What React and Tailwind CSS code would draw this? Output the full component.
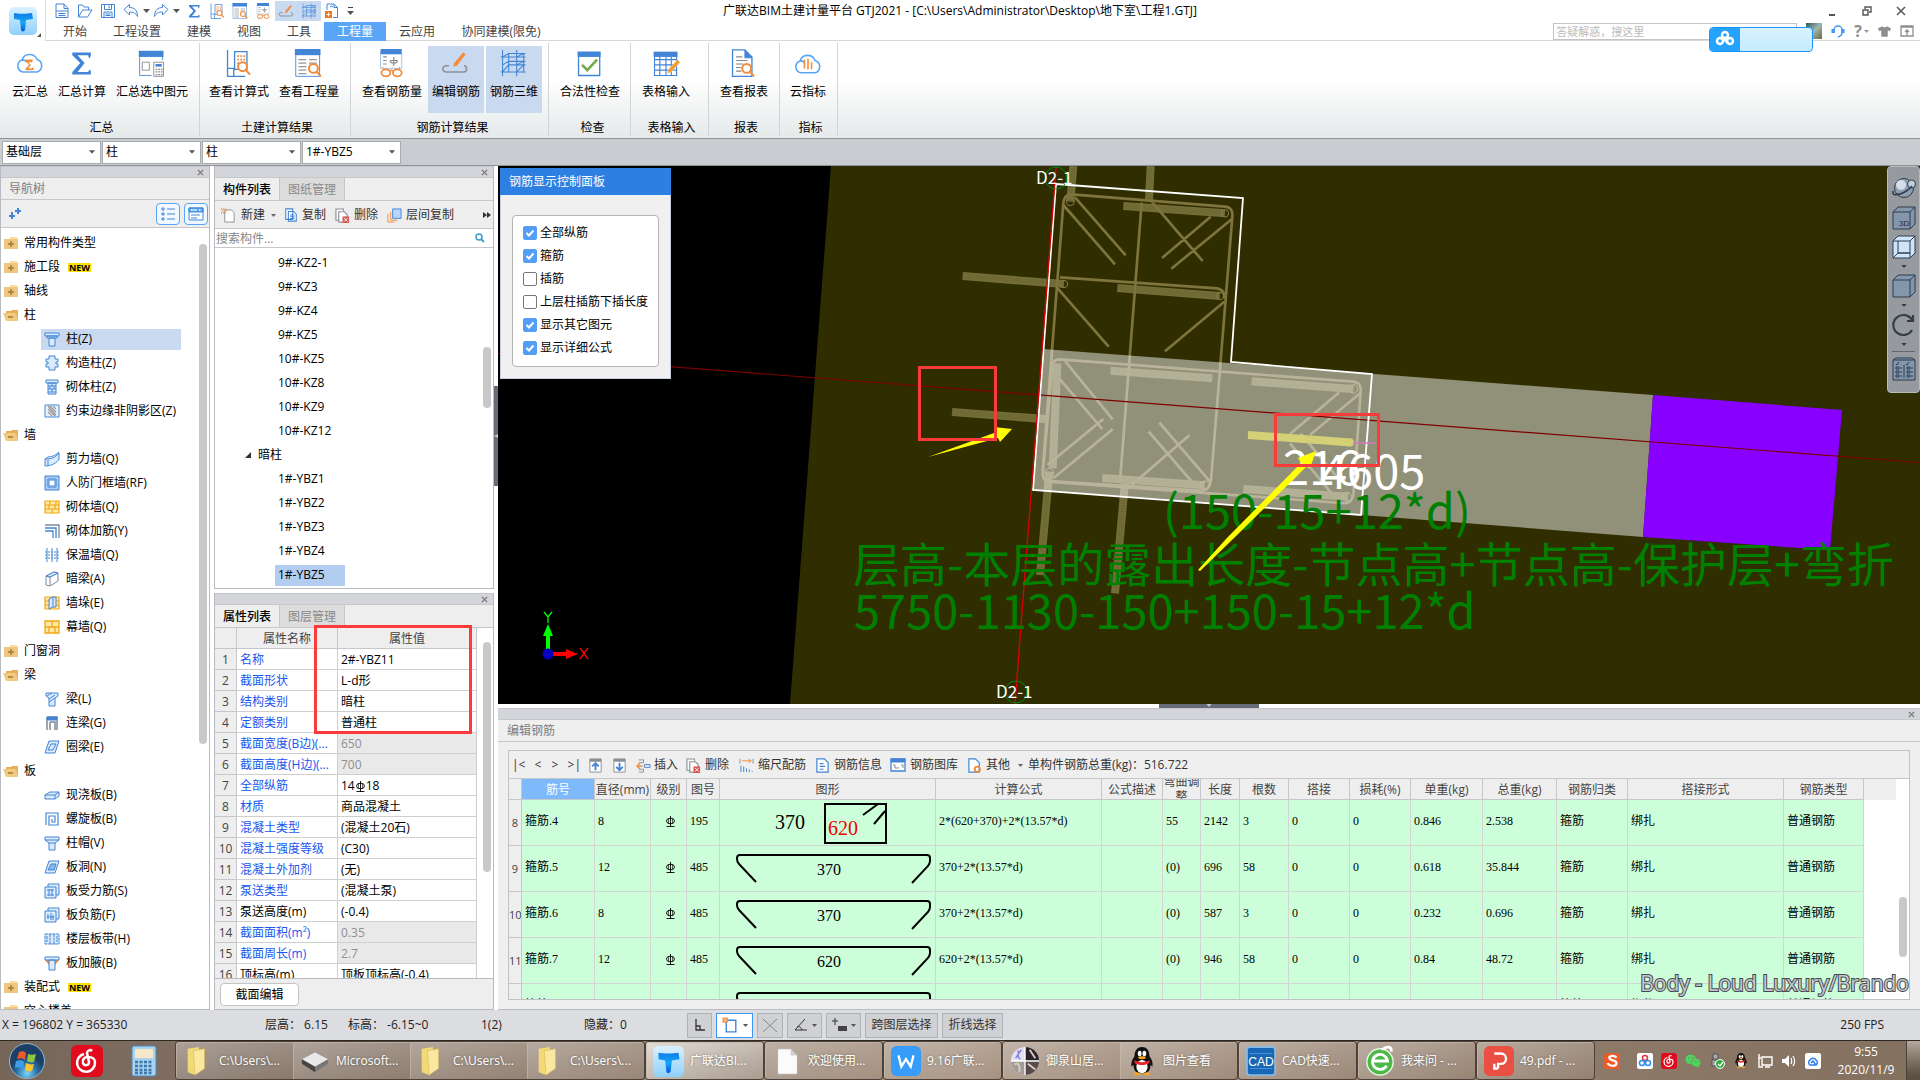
import { useState } from "react";
import { FaTshirt, FaWeixin } from "react-icons/fa";

const BLUE = "#4285d6";
const ORANGE = "#f08c3c";

function Svg({ size = 16, box = 16, className = "", children }) {
    return (
        <svg width={size} height={size} viewBox={`0 0 ${box} ${box}`} fill="none" stroke={BLUE} strokeWidth="1" className={`shrink-0 ${className}`} aria-hidden="true">
            {children}
        </svg>
    );
}

function Caret({ className = "text-[#555]" }) {
    return (
        <svg width="7" height="4" viewBox="0 0 7 4" className={`shrink-0 ${className}`} aria-hidden="true">
            <path d="M0 0h7L3.5 4z" fill="currentColor" />
        </svg>
    );
}

const Magnifier = ({ x, y, r = 3 }) => (
    <g stroke={ORANGE} strokeWidth={r / 2.2} fill="#fff">
        <circle cx={x} cy={y} r={r} />
        <path d={`M${x + r * 0.7} ${y + r * 0.7}l${r} ${r * 1.1}`} />
    </g>
);

const Sigma = ({ color = BLUE }) => <path d="M27 8V4H6v3l9 9-9 10v3h21v-5h-2l-1 2H12l8-10-8-9h12l1 4z" fill={color} stroke="none" />;

/* 32x32 drawings, shared by the quick access bar and the ribbon */
const bigIcons = {
    cloudSum: (
        <>
            <path d="M9 26a7 7 0 0 1-1-13.500A9 9 0 0 1 25 12a7.300 7.300 0 0 1 0 14zM8 13c2-1 4 0 5 2" stroke="#5aa5f5" strokeWidth="1.800" />
            <path d="M20 14v-2h-8v2l4 4-4 4v2h9v-3h-1l-1 1h-4l3-4-3-3h4z" fill={ORANGE} stroke="none" />
        </>
    ),
    sigma: <Sigma />,
    selected: (
        <>
            <path d="M3 3h26v27H3z" fill="#fff" />
            <path d="M2 2h28v7H2z" fill={BLUE} stroke="none" />
            <path d="M6 15h8v9H6z" stroke="#888" />
            <path d="M17 13h15v19H17z" fill="#fff" stroke="#fff" />
            <path d="M19 15h11v16H19z" stroke="#888" />
            <path d="M21 17h7v3h-7z" fill={BLUE} stroke="none" />
            <path d="M21 23h8M21 26h8M21 29h8" stroke="#888" strokeDasharray="2 1" strokeWidth="1.500" />
        </>
    ),
    formula: (
        <>
            <path d="M4 1v30h20M4 22h7v9M12 3h14v20H12z" fill="#fff" strokeWidth="1.500" />
            <path d="M15 8h9M15 12h9M15 16h6" stroke={ORANGE} strokeWidth="2" strokeDasharray="2 1.500" />
            <Magnifier x={21} y={20} r={5} />
        </>
    ),
    quantity: (
        <>
            <path d="M2 1h27v30H2z" fill="#fff" />
            <path d="M1 0h29v7H1z" fill={BLUE} stroke="none" />
            <path d="M5 12h9M17 12h9M5 16h9M17 16h9M5 20h9M5 24h9M5 28h9" stroke="#999" strokeWidth="1.500" />
            <Magnifier x={22} y={22} r={5} />
        </>
    ),
    rebarAmount: (
        <>
            <path d="M4 4h24v18H4z" stroke="#9bbde8" />
            <path d="M4 0h24v6H4z" fill={BLUE} stroke="none" />
            <path d="M7 9h4M7 13h4M7 17h4M19 9v10M15 13a4 3 0 0 0 8 0M15 13h8" stroke="#888" strokeWidth="1.300" />
            <path d="M6 22l1-2M26 22l-1-2" stroke={ORANGE} />
            <ellipse cx="10" cy="27" rx="5" ry="4" stroke={ORANGE} strokeWidth="2" fill="#fff" />
            <ellipse cx="23" cy="27" rx="5" ry="4" stroke={ORANGE} strokeWidth="2" fill="#fff" />
            <path d="M14 25c1-1 3-1 4 0" stroke={ORANGE} strokeWidth="2" />
        </>
    ),
    editRebar: (
        <>
            <path d="M9 19H6a4 3.500 0 0 0 0 7h20a3 3.500 0 0 0 0-7" stroke="#8a9099" strokeWidth="1.800" />
            <path d="M14 20l1-4L25 4l3 2-10 13z" fill={ORANGE} stroke="none" />
        </>
    ),
    rebar3d: <path d="M4 1v30M11 5v22M20 1v30M28 5v22M2 9h28M2 26h28M4 9l7-4h19M4 26l7-8h19M20 9l8-4M20 26l8-8M11 14h19M4 18l7-4M20 18l8-4" strokeWidth="1.200" />,
    check: (
        <>
            <path d="M4 4h24v26H4z" fill="#fff" strokeWidth="1.500" />
            <path d="M3 3h26v6H3z" fill={BLUE} stroke="none" />
            <path d="M8 18l6 6 11-12" stroke="#72ab4e" strokeWidth="3" />
        </>
    ),
    tableIn: (
        <>
            <path d="M4 5h25v25H4zM4 12h25M4 18h25M4 24h25M10 9v21M17 9v21M23 9v21" fill="#fff" strokeWidth="1.300" />
            <path d="M3 3h27v6H3z" fill={BLUE} stroke="none" />
            <path d="M18 28l2-5 10-11 3 3-10 11z" fill="#f39a20" stroke="#fff" strokeWidth=".5" />
        </>
    ),
    report: (
        <>
            <path d="M4 1h14l8 8v22H4z" fill="#fff" strokeWidth="1.500" />
            <path d="M18 1v9h8z" fill={BLUE} />
            <path d="M8 9h7M8 13h13M8 17h8M8 21h6M8 25h6" stroke="#888" strokeWidth="1.300" />
            <Magnifier x={20} y={22} r={5} />
        </>
    ),
    cloudIndex: (
        <>
            <path d="M9 27a7 7 0 0 1-1-13.500A9 9 0 0 1 25 13a7.300 7.300 0 0 1 0 14zM8 14c2-1 4 0 5 2" stroke="#5aa5f5" strokeWidth="1.800" />
            <path d="M13 12v10M17 11v12M21 15v8" stroke={ORANGE} strokeWidth="1.800" />
        </>
    ),
    file: <path d="M4 2h16l8 9v18H4zM20 2v9h8M4 16h24M9 21h14M9 25h14" strokeWidth="2" />,
    open: <path d="M3 28V4h8l3 4h9v6M3 28l8-14h19l-9 14z" strokeWidth="2" />,
    save: <path d="M3 3h26v26H3zM9 3v10h14V3M18 5v6M8 29V18h16v11M11 22h10M11 25h10" strokeWidth="2" />,
    undo: <path d="M2 13L13 3v6c9 0 16 5 16 18-4-7-8-9-16-9v6z" strokeWidth="2" />,
    redo: <path d="M30 13L19 3v6C10 9 3 14 3 27c4-7 8-9 16-9v6z" strokeWidth="2" />,
    addFile: (
        <>
            <path d="M6 14V2h14l7 7v20h-9M20 2v7h7M12 8a4 4 0 0 1 6 0" strokeWidth="2" />
            <path d="M2 16h14v14H2z" fill="#f07818" stroke="none" />
            <path d="M9 19v8M5 23h8" stroke="#fff" strokeWidth="2" />
        </>
    ),
};

const BigIcon = ({ name, size = 28 }) => <Svg size={size} box={34}>{bigIcons[name]}</Svg>;

const ribbon = [
    { label: "汇总", cls: "w-[200px] pl-1", items: [["云汇总", "cloudSum", "w-[52px]"], ["汇总计算", "sigma", "w-[52px]"], ["汇总选中图元", "selected", "w-[88px]"]] },
    { label: "土建计算结果", cls: "w-[151px] pl-1", items: [["查看计算式", "formula", "w-[70px]"], ["查看工程量", "quantity", "w-[70px]"]] },
    { label: "钢筋计算结果", cls: "w-[198px] pl-[6px]", items: [["查看钢筋量", "rebarAmount", "w-[70px]"], ["编辑钢筋", "editRebar", "w-14 ml-px", true], ["钢筋三维", "rebar3d", "w-14 ml-[2px]", true]] },
    { label: "检查", cls: "w-[82px] pl-[6px]", items: [["合法性检查", "check", "w-[70px]"]] },
    { label: "表格输入", cls: "w-[78px] pl-1", items: [["表格输入", "tableIn", "w-[62px]"]] },
    { label: "报表", cls: "w-[71px] pl-1", items: [["查看报表", "report", "w-[62px]"]] },
    { label: "指标", cls: "w-[58px] pl-1", items: [["云指标", "cloudIndex", "w-[48px]"]] },
];

const menuTabs = [
    ["开始", "w-[50px]"], ["工程设置", "w-[74px]"], ["建模", "w-[50px]"], ["视图", "w-[50px]"], ["工具", "w-[50px]"],
    ["工程量", "w-[62px]"], ["云应用", "w-[62px]"], ["协同建模(限免)", "w-[106px]"],
];

function QuickButton({ name, label, on }) {
    return (
        <button aria-label={label} className={`flex h-[20px] w-[23px] items-center justify-center ${on ? "bg-[#c9d9f0]" : ""}`}>
            <BigIcon name={name} size={17} />
        </button>
    );
}

function Logo({ size = 28 }) {
    return (
        <svg width={size} height={size} viewBox="0 0 28 28" className="shrink-0" aria-hidden="true">
            <defs>
                <linearGradient id="lg" x1="0" y1="0" x2="0" y2="1"><stop offset="0" stopColor="#d9f1ff" /><stop offset="1" stopColor="#8fd0fb" /></linearGradient>
                <linearGradient id="tg" x1="0" y1="0" x2="0" y2="1"><stop offset="0" stopColor="#0d7bea" /><stop offset=".5" stopColor="#15a8f4" /><stop offset="1" stopColor="#0759d4" /></linearGradient>
            </defs>
            <rect width="28" height="28" rx="5" fill="url(#lg)" />
            <path d="M5 6c3 1 14 1 18 0l1 6-7 1-1 10c-2 2-3 2-4 0l-1-10-6-1z" fill="url(#tg)" />
        </svg>
    );
}

function Header() {
    return (
        <header className="relative h-[41px] shrink-0 bg-white">
            <div className="absolute left-0 top-0 z-10 flex h-[41px] w-[46px] items-center justify-center border-r border-[#ddd] bg-white">
                <Logo />
                <span className="absolute bottom-1 right-1 h-0 w-0 border-b-4 border-l-4 border-b-[#555] border-l-transparent" />
            </div>
            <div className="grid h-[22px] grid-cols-[1fr_auto_1fr] items-center">
                <div className="flex items-center pl-[51px]">
                    <QuickButton name="file" label="新建" />
                    <QuickButton name="open" label="打开" />
                    <QuickButton name="save" label="保存" />
                    <QuickButton name="undo" label="撤销" />
                    <Caret />
                    <QuickButton name="redo" label="恢复" />
                    <Caret className="mr-[3px] text-[#555]" />
                    <QuickButton name="sigma" label="汇总计算" />
                    <QuickButton name="formula" label="查看计算式" />
                    <QuickButton name="quantity" label="查看工程量" />
                    <QuickButton name="rebarAmount" label="查看钢筋量" />
                    <QuickButton name="editRebar" label="编辑钢筋" on />
                    <QuickButton name="rebar3d" label="钢筋三维" on />
                    <QuickButton name="addFile" label="添加" />
                    <div className="ml-[3px] flex flex-col items-center gap-[3px]"><span className="h-px w-[5px] bg-[#444]" /><Caret /></div>
                </div>
                <h1 className="text-black">广联达BIM土建计量平台 GTJ2021 - [C:\Users\Administrator\Desktop\地下室\工程1.GTJ]</h1>
                <div className="flex items-center justify-end gap-[24px] pr-[14px] text-[#555]">
                    <button aria-label="最小化" className="flex h-4 w-[12px] items-end justify-center pb-[3px]"><span className="h-[2px] w-[6px] bg-[#555]" /></button>
                    <button aria-label="还原"><Svg size={10} box={10}><path d="M3 3V1h6v5H7M1 4h5v5H1z" stroke="#555" strokeWidth="1.400" /></Svg></button>
                    <button aria-label="关闭"><Svg size={10} box={10}><path d="M1 1l8 8M9 1L1 9" stroke="#555" strokeWidth="1.500" /></Svg></button>
                </div>
            </div>
            <div className="flex h-[19px] items-center justify-between border-b border-[#d8d8d8] pl-[50px]">
                <nav className="flex text-[#444]">
                    {menuTabs.map(([t, w]) => (
                        <button key={t} className={`h-[19px] pt-px text-center ${w} ${t === "工程量" ? "bg-[#5aa5f5] text-white" : ""}`}>{t}</button>
                    ))}
                </nav>
                <div className="relative flex items-center gap-[9px] pr-[6px]">
                    <input aria-label="搜索" placeholder="答疑解惑，搜这里" className="h-[17px] w-[244px] border border-[#c4c4c4] px-[2px] text-[11px] placeholder:text-[#bbb]" />
                    <span className="h-4 w-4 bg-linear-to-br from-[#2f5a5e] via-[#9fb8b0] to-[#6e6a3e]" />
                    <Svg size={14} box={14}><path d="M3 9V6a4 4 0 0 1 8 0v3c0 2-1 3-4 4" stroke="#3c96f5" strokeWidth="1.500" /><path d="M2 5v4M12 5v4" stroke="#3c96f5" strokeWidth="3" /></Svg>
                    <button aria-label="帮助" className="flex items-center gap-[2px] text-[16px] font-bold text-[#8e8e8e]">?<Caret className="h-[3px] w-[5px] text-[#999]" /></button>
                    <FaTshirt className="text-[13px] text-[#8e8e8e]" />
                    <Svg size={14} box={14}><path d="M1 2h12v10H1zM1 3h12M7 11V6M5 8l2-2 2 2" stroke="#8e8e8e" strokeWidth="1.300" /></Svg>
                    <div className="absolute right-[107px] top-1 flex h-[25px] w-[104px] overflow-hidden rounded border border-[#1b94fb] bg-linear-to-b from-[#d9f2fe] to-[#c4ecfe]">
                        <div className="flex w-[30px] items-center justify-center bg-[#25a2fb]">
                            <Svg size={20} box={20}><g stroke="#fff" strokeWidth="2.500"><circle cx="10" cy="6" r="3" /><circle cx="5" cy="12" r="3" /><circle cx="15" cy="12" r="3" /><path d="M8 9l5 5" /></g></Svg>
                        </div>
                    </div>
                </div>
            </div>
        </header>
    );
}

function Ribbon() {
    return (
        <div className="flex h-[97px] shrink-0 bg-linear-to-b from-white from-40% to-[#e5e9ea] text-black">
            {ribbon.map((g) => (
                <section key={g.label} className={`flex flex-col ${g.cls} my-[2px] border-r border-[#d2d4d6]`}>
                    <div className="mt-[3px] flex">
                        {g.items.map(([t, icon, w, on]) => (
                            <button key={t} className={`flex h-[67px] flex-col items-center whitespace-nowrap pt-[3px] ${w} ${on ? "bg-[#c9d9f0]" : ""}`}>
                                <BigIcon name={icon} size={30} />
                                <span className="mt-[5px] leading-4">{t}</span>
                            </button>
                        ))}
                    </div>
                    <div className="mt-[5px] text-center leading-5">{g.label}</div>
                </section>
            ))}
        </div>
    );
}

function FilterBar() {
    return (
        <div className="flex h-[28px] shrink-0 items-center gap-px border-y border-[#8f9297] bg-[#c9ccd1] px-[2px]">
            {["基础层", "柱", "柱", "1#-YBZ5"].map((v, i) => (
                <div key={i} className="relative flex items-center">
                    <select aria-label={`筛选${i + 1}`} defaultValue={v} className="h-[23px] w-[99px] appearance-none border border-[#aaacb0] bg-white pl-[3px] leading-[20px] text-black">
                        <option>{v}</option>
                    </select>
                    <Caret className="pointer-events-none absolute right-[6px] h-[4px] w-[6px] text-[#555]" />
                </div>
            ))}
        </div>
    );
}

const LF = "#dcebfb";
const navIcons = {
    column: <path d="M1 2h14v3H1zM3 5h10v2H3zM5 7h6v8H5z" fill={LF} />,
    struct: <path d="M5 1h6v3h3v3h-2v2h2v3h-3v3H5v-3H2V9h2V7H2V4h3z" fill={LF} />,
    brickCol: <path d="M2 1h12v3H2zM4 4h8v11H4zM4 7h8M4 10h8M4 13h8M8 4v3M6 7v3M10 7v3M8 10v3" fill={LF} />,
    edge: <><path d="M1 2h14v12H1z" fill="#eef4fb" /><path d="M4 3l8 9M4 6l7 7M6 3l6 6M4 9l4 4M9 3l3 3" stroke="#999" strokeWidth="1.300" /></>,
    shear: <path d="M1 8c6 0 10-1 14-6v6c-2 4-8 7-14 7zM1 8l3-2c5 0 8-2 11-5M4 9v6" fill={LF} />,
    frame: <><path d="M1 1h14v14H1z" fill="#a9ccf5" /><path d="M4 4h8v8H4z" fill="#fff" /><path d="M5 5h6v6H5z" /></>,
    brick: <path d="M1 2h14v12H1zM1 6h14M1 10h14M6 2v4M11 6v4M5 6v4M8 10v4M12 2v4" fill="#ffe9a8" stroke="#f3a712" strokeWidth="1.200" />,
    brickRebar: <><path d="M1 5h11v10M1 8h8v7" strokeWidth="1.300" /><path d="M1 2h14v13" stroke="#7c8a99" strokeWidth="1.300" /></>,
    insul: <><path d="M3 1v14M8 1v14M13 1v14" /><path d="M1 5h14M1 8h14M1 11h14" strokeDasharray="2 1" /></>,
    hidden: <><path d="M2 5l8-4 4 1v8l-8 5-4-1zM2 5l4 1 8-4M6 6v9" stroke="#7c8a99" fill="#fff" /><path d="M2 5l8-4 4 1-8 4z" fill={LF} /></>,
    pier: <><path d="M1 2h14v12H1zM1 6h14M1 10h14" fill="#ffe9a8" stroke="#f3a712" strokeWidth="1.200" /><path d="M5 4l4-2v10l-4 2zM9 2h3v10H9" fill={LF} /></>,
    curtain: <path d="M1 2h14v12H1zM1 8h14M8 2v6M5 8v6M11 8v6" fill="#ffe9a8" stroke="#f3a712" strokeWidth="1.300" />,
    beam: <path d="M2 2h12v3l-3 2v8H5V7L2 5zM3 5l5-3M5 8l6-4M5 11l6-4" fill={LF} />,
    link: <><path d="M3 2h10v13M3 2v13M6 7h5v8M6 7v8" stroke="#7c8a99" strokeWidth="1.500" /><path d="M3 2h10v3H3z" fill={BLUE} /></>,
    ring: <path d="M5 2h10l-4 12H1zM7 5h5l-3 6H4z" fill={LF} />,
    slab: <path d="M1 8l5-3h9v4l-4 3H1zM1 8h10v4M11 8l4-3" fill={LF} />,
    spiral: <path d="M2 14V2h12v12H5V5h6v6H8V8" strokeWidth="1.200" />,
    cap: <path d="M1 2h14v3H1zM1 5l4 3h6l4-3M5 8v7h6V8" fill={LF} />,
    hole: <><path d="M5 2h10l-4 12H1z" fill={LF} /><path d="M7 5h5l-2 6H4z" fill="#8bb8ec" /></>,
    slabRebar: <path d="M1 4h11v11H1zM4 4V1h11v11h-3M3 7h7M3 12h7M5 6v7M8 6v7" fill={LF} />,
    negRebar: <path d="M1 4h11v11H1zM4 4V1h11v11h-3M3 10h7M4 7v5M7 6v7M9 8v5" fill={LF} />,
    strip: <path d="M1 3h14v10H1zM6 3v10M10 3v10M3 5v6M13 5v6" strokeDasharray="3 .600" fill={LF} />,
    haunch: <><path d="M1 5h14l-4 5H5z" fill={ORANGE} stroke="none" /><path d="M1 2h14v3H1zM5 5h6v10H5z" fill={LF} /></>,
};

const navTree = [
    { t: "常用构件类型" }, { t: "施工段", isNew: true }, { t: "轴线" },
    { t: "柱", kids: [["柱(Z)", "column"], ["构造柱(Z)", "struct"], ["砌体柱(Z)", "brickCol"], ["约束边缘非阴影区(Z)", "edge"]] },
    { t: "墙", kids: [["剪力墙(Q)", "shear"], ["人防门框墙(RF)", "frame"], ["砌体墙(Q)", "brick"], ["砌体加筋(Y)", "brickRebar"], ["保温墙(Q)", "insul"], ["暗梁(A)", "hidden"], ["墙垛(E)", "pier"], ["幕墙(Q)", "curtain"]] },
    { t: "门窗洞" },
    { t: "梁", kids: [["梁(L)", "beam"], ["连梁(G)", "link"], ["圈梁(E)", "ring"]] },
    { t: "板", kids: [["现浇板(B)", "slab"], ["螺旋板(B)", "spiral"], ["柱帽(V)", "cap"], ["板洞(N)", "hole"], ["板受力筋(S)", "slabRebar"], ["板负筋(F)", "negRebar"], ["楼层板带(H)", "strip"], ["板加腋(B)", "haunch"]] },
    { t: "装配式", isNew: true }, { t: "空心楼盖" },
];

function Folder({ open }) {
    return (
        <Svg size={16}>
            {open ? (
                <><path d="M3 14V4h5l1-1h6v11" fill="#e2b25c" stroke="none" /><path d="M0 6h13l2 8H3z" fill="#f0c983" stroke="none" /><path d="M5 10h5" stroke="#a8792a" strokeWidth="1.500" /></>
            ) : (
                <><path d="M7 2h7v2H7z" fill="#f6dca6" stroke="none" /><path d="M1 4h14v10H1z" fill="#eec680" stroke="none" /><path d="M8 6v6M5 9h6" stroke="#a8792a" strokeWidth="1.500" /></>
            )}
        </Svg>
    );
}

function PanelStrip() {
    return (
        <div className="flex h-[12px] shrink-0 items-center justify-end border-y border-[#c5c7cb] bg-[#d4d5da] pr-[5px]">
            <button aria-label="关闭面板"><Svg size={7} box={8}><path d="M1 1l6 6M7 1L1 7" stroke="#777" strokeWidth="1.500" /></Svg></button>
        </div>
    );
}

function NavPanel() {
    const [current, setCurrent] = useState("柱(Z)");
    return (
        <aside className="flex w-[210px] shrink-0 flex-col border-x border-b border-[#b9bbc0] bg-white">
            <PanelStrip />
            <h2 className="flex h-[22px] shrink-0 items-center border-b border-[#c5c7cb] bg-[#eee] pl-2 pt-px text-[#7d7d7d]">导航树</h2>
            <div className="flex h-[28px] shrink-0 items-center gap-1 border-b border-[#c5c7cb] bg-[#eee] pl-[7px] pr-px">
                <Svg size={13} box={13}><path d="M4 5v7M1 9h6M10 1v6M7 4h6" strokeWidth="2" /></Svg>
                <button aria-label="列表视图" className="ml-auto flex h-[22px] w-6 items-center justify-center rounded border border-[#5aa5f5] bg-[#f2f8ff]">
                    <Svg size={14} box={14}><path d="M1 1h2v2H1zM1 6h2v2H1zM1 11h2v2H1zM6 2h8M6 7h8M6 12h8" /></Svg>
                </button>
                <button aria-label="卡片视图" className="flex h-[22px] w-6 items-center justify-center rounded border border-[#5aa5f5] bg-[#f2f8ff]">
                    <Svg size={16}><path d="M1 2h14v12H1z" fill="#fff" /><path d="M1 2h14v4H1z" fill="#5aa5f5" /><path d="M3 4h6M11 4h2" stroke="#fff" strokeWidth="1.500" strokeDasharray="1.500 .500" /><path d="M3 9h9M3 12h6" /></Svg>
                </button>
            </div>
            <div className="relative min-h-0 flex-1 overflow-hidden pt-[3px]">
                <ul className="text-black">
                    {navTree.map((n) => (
                        <li key={n.t}>
                            <button className="flex h-6 items-center gap-[5px] pl-[2px]">
                                <Folder open={!!n.kids} />
                                {n.t}
                                {n.isNew && <em className="ml-[3px] bg-[#ffe100] px-px text-[9px] font-bold not-italic leading-[9px]">NEW</em>}
                            </button>
                            {n.kids && (
                                <ul className="pl-10">
                                    {n.kids.map(([t, icon]) => (
                                        <li key={t} className="flex h-6 items-center">
                                            <button onClick={() => setCurrent(t)} className={`flex h-[21px] w-[140px] items-center gap-[6px] whitespace-nowrap pl-[3px] ${current === t ? "bg-[#c9d9f0]" : ""}`}>
                                                <Svg>{navIcons[icon]}</Svg>{t}
                                            </button>
                                        </li>
                                    ))}
                                </ul>
                            )}
                        </li>
                    ))}
                </ul>
                <span className="absolute right-[2px] top-4 h-[500px] w-2 rounded-full bg-[#c8c8c8]" />
            </div>
        </aside>
    );
}

function PanelTabs({ tabs }) {
    return (
        <div className="flex h-[23px] shrink-0 border-b border-[#c5c7cb] bg-[#eee]">
            <button className="w-[65px] border-r border-[#c5c7cb] pt-[2px] font-medium text-black">{tabs[0]}</button>
            <button className="w-[65px] border-r border-[#c5c7cb] bg-[#dcdcdd] pt-[2px] text-[#8a8a8a]">{tabs[1]}</button>
        </div>
    );
}

const CopyIcon = () => <Svg size={14}><path d="M2 1h8v12H2zM5 4h6l3 3v8H5zM7 8h5M7 10h5M7 12h5" fill="#fff" strokeWidth="1.200" /></Svg>;
const DeleteIcon = () => (
    <Svg size={15}><path d="M4 13H1V1h8v2M4 4h6l3 3v8H4z" stroke="#8a8f96" strokeWidth="1.200" fill="#fff" /><path d="M8 9h7v7H8z" fill="#d9534f" stroke="none" /><path d="M9.500 10.500l4 4M13.500 10.500l-4 4" stroke="#fff" /></Svg>
);

const members = ["9#-KZ2-1", "9#-KZ3", "9#-KZ4", "9#-KZ5", "10#-KZ5", "10#-KZ8", "10#-KZ9", "10#-KZ12"];
const hiddenColumns = ["1#-YBZ1", "1#-YBZ2", "1#-YBZ3", "1#-YBZ4", "1#-YBZ5"];

function MemberPanel() {
    return (
        <section className="flex h-[423px] shrink-0 flex-col border border-t-0 border-[#b9bbc0] bg-white">
            <PanelStrip />
            <PanelTabs tabs={["构件列表", "图纸管理"]} />
            <div className="flex h-[28px] shrink-0 items-center border-b border-[#c5c7cb] bg-[#eee] pl-[6px] pt-px text-[#333]">
                <button className="flex w-[63px] items-center gap-[5px]">
                    <Svg size={15}><path d="M4 2h7l3 3v10H4z" stroke="#8a8f96" fill="#fff" /><path d="M0 1h5M1 3h5M0 5h5" stroke={ORANGE} strokeDasharray="1 1" strokeWidth="1.500" /></Svg>
                    新建<Caret className="ml-px h-[3px] w-[5px] text-[#666]" />
                </button>
                <button className="flex w-[51px] items-center gap-1"><CopyIcon />复制</button>
                <button className="flex w-[52px] items-center gap-1"><DeleteIcon />删除</button>
                <button className="flex items-center gap-1"><Svg size={15}><path d="M6 1h9v10H6z" fill="#b7d6fa" /><path d="M4 4v9h7M1 6v9h7" stroke={ORANGE} /></Svg>层间复制</button>
                <span className="ml-auto pr-[2px]"><Svg size={8} box={8}><path d="M0 1l4 3-4 3zM4 1l4 3-4 3z" fill="#333" stroke="none" /></Svg></span>
            </div>
            <div className="flex h-[19px] shrink-0 items-center border-b border-[#c5c7cb] pr-2">
                <input aria-label="搜索构件" placeholder="搜索构件..." className="min-w-0 flex-1 pl-px pt-px leading-4 outline-none placeholder:text-[#888]" />
                <Svg size={10} box={10}><circle cx="4" cy="4" r="3" strokeWidth="1.500" stroke="#3b9ad6" /><path d="M6 6l3 3" stroke="#3b9ad6" strokeWidth="1.800" /></Svg>
            </div>
            <div className="relative min-h-0 flex-1 overflow-hidden pt-[3px] text-black">
                {members.map((m) => <button key={m} className="block h-6 pl-[63px]">{m}</button>)}
                <button className="flex h-6 items-center gap-[7px] pl-[30px]">
                    <Svg size={6} box={6}><path d="M6 0v6H0z" fill="#333" stroke="none" /></Svg>暗柱
                </button>
                {hiddenColumns.map((m) => (
                    <div key={m} className="flex h-6 items-center pl-[60px]">
                        <button className={`h-[21px] w-[70px] pl-[3px] text-left ${m === "1#-YBZ5" ? "bg-[#b2cdf0]" : ""}`}>{m}</button>
                    </div>
                ))}
                <span className="absolute right-[2px] top-[99px] h-[61px] w-2 rounded-full bg-[#c8c8c8]" />
            </div>
        </section>
    );
}

function RebarMark() {
    return (
        <svg width="11" height="12" viewBox="0 0 11 12" fill="none" stroke="#000" strokeWidth=".9" className="inline-block" aria-hidden="true">
            <path d="M5.500 0v11M1.500 10.500h8" />
            <ellipse cx="5.500" cy="5" rx="4" ry="2.800" />
            <path d="M3.500 2.500v5M7.500 2.500v5" strokeWidth=".6" />
        </svg>
    );
}

const props = [
    ["名称", "2#-YBZ11"], ["截面形状", "L-d形"], ["结构类别", "暗柱"], ["定额类别", "普通柱"],
    ["截面宽度(B边)(...", "650", "off"], ["截面高度(H边)(...", "700", "off"], ["全部纵筋", <>14<RebarMark />18</>], ["材质", "商品混凝土"],
    ["混凝土类型", "(混凝土20石)"], ["混凝土强度等级", "(C30)"], ["混凝土外加剂", "(无)"], ["泵送类型", "(混凝土泵)"],
    ["泵送高度(m)", "(-0.4)", "plain"], ["截面面积(m²)", "0.35", "off"], ["截面周长(m)", "2.7", "off"], ["顶标高(m)", "顶板顶标高(-0.4)", "plain"],
];

function PropertyPanel() {
    return (
        <section className="relative mt-1 flex min-h-0 flex-1 flex-col border border-[#b9bbc0] border-t-0 bg-[#eee]">
            <PanelStrip />
            <PanelTabs tabs={["属性列表", "图层管理"]} />
            <div className="relative min-h-0 flex-1 overflow-hidden border-b border-[#b9bbc0] bg-white">
                <table className="w-[262px] table-fixed border-separate border-spacing-0 text-left">
                    <colgroup><col className="w-[22px]" /><col className="w-[101px]" /><col /></colgroup>
                    <thead>
                        <tr className="h-[21px] bg-[#eee] text-center text-[#444] [&>th]:pb-0 [&>th]:pt-px">
                            <th className="border-b border-r border-[#c5c7cb]" />
                            <th className="border-b border-r border-[#c5c7cb] font-normal leading-[19px]">属性名称</th>
                            <th className="border-b border-r border-[#c5c7cb] font-normal leading-[19px]">属性值</th>
                        </tr>
                    </thead>
                    <tbody>
                        {props.map(([k, v, kind], i) => (
                            <tr key={k} className="h-[21px] whitespace-nowrap leading-[18px] [&>*]:pb-0 [&>*]:pt-[2px]">
                                <th className="border-b border-r border-[#c5c7cb] bg-[#eee] text-center font-normal text-[#444]">{i + 1}</th>
                                <td className={`overflow-hidden border-b border-r border-[#cfcfcf] pl-[3px] ${kind === "plain" ? "text-black" : "text-[#1a56f0]"}`}>{k}</td>
                                <td className={`border-b border-r border-[#cfcfcf] pl-[3px] ${kind === "off" ? "bg-[#e9e9e9] text-[#8f8f8f]" : "text-black"}`}>{v}</td>
                            </tr>
                        ))}
                    </tbody>
                </table>
                <span className="absolute right-[2px] top-[14px] h-[230px] w-2 rounded-full bg-[#c8c8c8]" />
            </div>
            <div className="flex h-[30px] shrink-0 items-center pl-[5px]">
                <button className="h-[23px] w-[79px] rounded border border-[#c4c4c4] bg-white pt-px text-black">截面编辑</button>
            </div>
            <span className="pointer-events-none absolute left-[99px] top-8 h-[109px] w-[158px] border-[3px] border-[#fb3a3a]" />
        </section>
    );
}

/* model space: hoops and bars share one local grid, three units to a pixel */
const hoops = [
    "M335 103L795 140Q820 142 817 170L753 960Q748 995 720 992L270 963Q245 960 248 935L310 130Q312 103 335 103",
    "M300 598L1180 665Q1205 668 1202 695L1180 1005Q1175 1033 1145 1029L265 965Q245 960 249 935L277 615Q280 598 300 598",
    "M545 128L480 965M300 352L770 385Q797 390 792 415",
    "M310 135L465 313M345 112L497 286M575 125L728 303M752 170L606 294M815 178L634 326",
    "M293 385L446 560M793 425L615 574M315 603L458 778M300 658L427 807M430 777L262 915M458 808L280 955",
    "M598 788L750 965M566 815L693 962M688 826L515 975M1138 697L990 822M1200 700L1050 825M990 850L1115 1000M1022 820L1130 950",
];
const bars = [
    "M340 18L331 125", "M572 18L567 120", "M490 138L795 160", "M8 348L312 372", "M472 384L780 408", "M-24 756L265 778",
    "M452 632L757 655", "M875 664L1180 687", "M292 610L278 925", "M268 935L240 1245", "M495 965L465 1300", "M427 954L735 976", "M850 987L1165 1010",
];

function ModelDrawing() {
    return (
        <svg className="block h-full w-full" viewBox="498 166 1422 538" preserveAspectRatio="xMinYMin slice" role="img" aria-label="钢筋三维视图">
            <path d="M498 166H1920V704H498z" fill="#000" />
            <path d="M831 166H1920V704H790z" fill="#302e00" />
            <g transform="translate(960 160) scale(.33333)" fill="none">
                <path d={bars.join("")} stroke="#736d38" strokeWidth="24" />
                <path d={bars.join("")} stroke="#665f2c" strokeWidth="14" strokeDasharray="3 5" opacity=".5" />
                <path d={hoops.join("")} stroke="#7f743e" strokeWidth="8" />
                <g stroke="#857c47" strokeWidth="3">
                    <circle cx="331" cy="125" r="12" /><circle cx="795" cy="160" r="11" /><circle cx="312" cy="372" r="11" /><circle cx="780" cy="408" r="11" />
                    <circle cx="1180" cy="687" r="13" /><circle cx="735" cy="976" r="13" /><circle cx="1162" cy="1010" r="13" /><circle cx="268" cy="938" r="13" />
                </g>
            </g>
            <path d="M1043 349L1653 395L1643 537L1361 515L1033 490z" fill="#f4f7f7" opacity=".494" />
            <path d="M1653 395L1842 410L1830 550L1643 537z" fill="#80f" />
            <path d="M498 353.500L1920 462.500" stroke="#7d0000" strokeWidth="1.200" />
            <path d="M1056 184L1243 198L1231 362L1372 374L1361 515L1033 490z" fill="none" stroke="#fff" strokeWidth="1.800" />
            <path d="M1056 168L1015 704" stroke="#e00000" strokeWidth="1.300" />
            <path d="M1248 435L1351 442.500" stroke="#d3d077" strokeWidth="8" strokeLinecap="butt" />
            <circle cx="1350" cy="442.500" r="4" fill="#d3d077" />
            <path d="M1353 443h23" stroke="#d67ac4" strokeWidth="1.500" />
            <g fill="none" stroke="#008a18"><circle cx="1056" cy="178" r="11" /><circle cx="1016" cy="692" r="11" /></g>
            <g fill="#fff" fontFamily="'Noto Sans CJK SC', sans-serif">
                <g fontSize="17"><text x="1036" y="184">D2-1</text><text x="996" y="698">D2-1</text></g>
                <g fontSize="47"><text x="1283" y="485">216</text><text x="1321" y="489">4605</text></g>
            </g>
            <g fill="#008000" fontSize="47" fontFamily="'Noto Sans CJK SC', sans-serif">
                <text x="1163" y="529">(150-15+12*d)</text>
                <text x="853" y="582">层高-本层的露出长度-节点高+节点高-保护层+弯折</text>
                <text x="854" y="629">5750-1130-150+150-15+12*d</text>
            </g>
            <g fill="#ff0">
                <path d="M928 457L994 433L994 427L1012 429L1000 442L998 438z" />
                <path d="M1198 570L1226 539L1301 463L1298 458L1316 451L1310 468L1306 467L1232 540L1200 571z" />
            </g>
            <path d="M919.500 367.500h76v72h-76zM1275.500 414.500h103v51h-103z" fill="none" stroke="#fb3a3a" strokeWidth="3" />
            <path d="M548 652V630" stroke="#0f0" strokeWidth="4" />
            <path d="M543 636L548 624L553 636z" fill="#0f0" />
            <path d="M552 654H568" stroke="red" strokeWidth="4" />
            <path d="M566 649L578 654L566 659z" fill="red" />
            <circle cx="548" cy="654" r="5.500" fill="#0000c0" />
            <path d="M544 612l4 5 4-5M548 617v6" stroke="#0f0" fill="none" strokeWidth="1.300" />
            <path d="M580 648l8 11M588 648l-8 11" stroke="#f00" strokeWidth="1.300" />
        </svg>
    );
}

const displayOptions = [["全部纵筋", true], ["箍筋", true], ["插筋", false], ["上层柱插筋下插长度", false], ["显示其它图元", true], ["显示详细公式", true]];

function DisplayPanel() {
    const [checked, setChecked] = useState(displayOptions.map((o) => o[1]));
    const toggle = (i) => setChecked(checked.map((c, j) => (i === j ? !c : c)));
    return (
        <div className="absolute left-[2px] top-[2px] w-[171px] border border-[#c5cede] bg-[#f0f0f0] pb-[11px]">
            <h2 className="-mx-px -mt-px flex h-[27px] items-center bg-[#2d7fe2] pl-[9px] text-white">钢筋显示控制面板</h2>
            <div className="mx-[11px] mt-5 rounded border border-[#b4b4b4] bg-white pb-[7px] pt-[5px] pl-[10px]">
                {displayOptions.map(([t], i) => (
                    <label key={t} className="flex h-[23px] items-center gap-[3px] whitespace-nowrap text-black">
                        <span className="relative flex h-[14px] w-[14px]">
                            <input type="checkbox" checked={checked[i]} onChange={() => toggle(i)} className="h-[14px] w-[14px] appearance-none rounded-[2px] border border-[#777] bg-white checked:border-[#539ef6] checked:bg-[#539ef6]" />
                            {checked[i] && <Svg size={14} box={14} className="pointer-events-none absolute inset-0"><path d="M3.500 7l2.500 2.500 4.500-5" stroke="#fff" strokeWidth="2" /></Svg>}
                        </span>
                        {t}
                    </label>
                ))}
            </div>
        </div>
    );
}

function Cube({ fill, inner, label }) {
    return (
        <button aria-label={label}>
            <Svg size={24} box={24}>
                <path d="M1 6l5-5h17v17l-5 5H1zM1 6h17v17M18 6l5-5" fill={fill} stroke="#2f3d4d" />
                {inner && <path d="M6 6v12h12M1 23l5-5h12" stroke="#2f3d4d" />}
                {label === "三维" && <text x="7" y="20" fontSize="8" fill="#1f2a36" stroke="none" fontFamily="'Liberation Sans', sans-serif">3D</text>}
            </Svg>
        </button>
    );
}

function ViewTools() {
    return (
        <div className="absolute right-0 top-0 flex h-[227px] w-[33px] flex-col items-center rounded border border-[#b8babd] bg-[#96999e] pt-[9px] text-[#333e4a]">
            <button aria-label="动态观察">
                <Svg size={24} box={24}>
                    <circle cx="12" cy="12" r="9.500" fill="#8f9fb2" stroke="#2f3d4d" />
                    <circle cx="9" cy="9" r="5" fill="#d5deea" stroke="none" />
                    <circle cx="19.500" cy="8" r="4" fill="#c3cedb" stroke="#2f3d4d" />
                    <path d="M1 18c6 2 14-2 19-8M1 18l3 1M1 18v-3" stroke="#2f3d4d" strokeWidth="1.500" />
                </Svg>
            </button>
            <div className="mt-[6px] flex flex-col items-center gap-[5px]">
                <Cube fill="#8496ac" label="三维" />
                <Cube fill="#cfe4fb" inner label="俯视" />
            </div>
            <Caret className="mt-[6px] h-[3px] w-[6px]" />
            <div className="mt-[6px] flex"><Cube fill="#8496ac" label="实体" /></div>
            <Caret className="mt-[6px] h-[3px] w-[6px]" />
            <button aria-label="旋转" className="mt-[6px]"><Svg size={24} box={24}><path d="M20 17a10 10 0 1 1 0-10M21 2v6h-6" stroke="#333e4a" strokeWidth="2.200" /></Svg></button>
            <Caret className="mt-[6px] h-[3px] w-[6px]" />
            <span className="my-[5px] h-px w-[23px] shrink-0 bg-[#666]" />
            <button aria-label="显示设置"><Svg size={24} box={24}><path d="M1 3l3-2h16l3 2v20H1zM1 3h22" fill="#8496ac" stroke="#2f3d4d" /><path d="M4 7l1 1 2-3M14 7l1 1 2-3M4 10h3v2H4zM4 14h3v2H4zM4 18h3v2H4zM15 10h3v2h-3zM15 14h3v2h-3zM15 18h3v2h-3zM12 8v13M8 11h2M8 15h2M8 19h2M19 11h2M19 15h2M19 19h2" stroke="#2f3d4d" /></Svg></button>
        </div>
    );
}

const columns = [
    ["", "w-[13px]"], ["筋号", "w-[73px]"], ["直径(mm)", "w-[56px]"], ["级别", "w-[36px]"], ["图号", "w-[33px]"], ["图形", "w-[216px]"], ["计算公式", "w-[166px]"],
    ["公式描述", "w-[61px]"], ["弯曲调整", "w-[38px]"], ["长度", "w-[39px]"], ["根数", "w-[49px]"], ["搭接", "w-[61px]"], ["损耗(%)", "w-[61px]"],
    ["单重(kg)", "w-[72px]"], ["总重(kg)", "w-[74px]"], ["钢筋归类", "w-[71px]"], ["搭接形式", "w-[156px]"], ["钢筋类型", "w-[80px]"],
];
const rows = [
    { no: 8, name: "箍筋.4", d: "8", fig: "195", shape: "box", f: "2*(620+370)+2*(13.57*d)", bend: "55", len: "2142", n: "3", w: "0.846", tw: "2.538" },
    { no: 9, name: "箍筋.5", d: "12", fig: "485", shape: "370", f: "370+2*(13.57*d)", bend: "(0)", len: "696", n: "58", w: "0.618", tw: "35.844" },
    { no: 10, name: "箍筋.6", d: "8", fig: "485", shape: "370", f: "370+2*(13.57*d)", bend: "(0)", len: "587", n: "3", w: "0.232", tw: "0.696" },
    { no: 11, name: "箍筋.7", d: "12", fig: "485", shape: "620", f: "620+2*(13.57*d)", bend: "(0)", len: "946", n: "58", w: "0.84", tw: "48.72" },
    { no: 12, name: "箍筋.8", d: "8", fig: "485", shape: "620", f: "620+2*(13.57*d)", bend: "(0)", len: "837", n: "3", w: "0.331", tw: "0.993" },
];

function ShapeFigure({ shape }) {
    return (
        <svg width="215" height="45" viewBox="0 0 215 45" fill="none" stroke="#000" strokeWidth="2" fontFamily="'Liberation Serif', serif" className="block">
            {shape === "box" ? (
                <>
                    <path d="M105 4h61v39h-61zM143 15l15-11M154 24l11-13" />
                    <text x="55" y="29" fontSize="20" fill="#000" stroke="none">370</text>
                    <text x="108" y="35" fontSize="20" fill="#f00000" stroke="none">620</text>
                </>
            ) : (
                <>
                    <path d="M36 36L19 18Q17 16 17 13V12Q17 9 20 9H207Q210 9 210 12V15Q210 17 208 20L192 37" />
                    <text x="97" y="29" fontSize="16" fill="#000" stroke="none">{shape}</text>
                </>
            )}
        </svg>
    );
}

function RebarTable() {
    return (
        <table className="w-[1355px] table-fixed border-separate border-spacing-0 text-left">
            <colgroup>{columns.map(([t, w]) => <col key={t} className={w} />)}</colgroup>
            <thead>
                <tr className="h-[21px] text-[#444]">
                    {columns.map(([t]) => (
                        <th key={t} className={`border-b border-r border-[#c5c7cb] p-0 font-normal ${t === "筋号" ? "bg-[#7db9fb] font-bold text-white" : "bg-[#eee]"}`}>
                            <div className="flex h-[20px] items-center justify-center overflow-hidden text-center leading-[15px]">{t}</div>
                        </th>
                    ))}
                </tr>
            </thead>
            <tbody className="font-['Liberation_Serif','Noto_Sans_CJK_SC',serif] text-black">
                {rows.map((r) => (
                    <tr key={r.no} className="h-[46px] [&>td]:border-b [&>td]:border-r [&>td]:border-[#d3d5d3] [&>td]:bg-[#ccffd9] [&>td]:pb-[3px] [&>td]:pl-[3px] [&>td]:pt-0">
                        <th className="overflow-hidden border-b border-r border-[#c5c7cb] bg-[#eee] p-0 text-center font-['Open_Sans',sans-serif] text-[11px] font-normal text-[#444]">{r.no}</th>
                        <td>{r.name}</td><td>{r.d}</td>
                        <td className="text-center"><RebarMark /></td>
                        <td>{r.fig}</td>
                        <td className="p-0!"><ShapeFigure shape={r.shape} /></td>
                        <td>{r.f}</td><td /><td>{r.bend}</td><td>{r.len}</td><td>{r.n}</td><td>0</td><td>0</td><td>{r.w}</td><td>{r.tw}</td>
                        <td>箍筋</td><td>绑扎</td><td>普通钢筋</td>
                    </tr>
                ))}
            </tbody>
        </table>
    );
}

function EditPanel() {
    return (
        <section className="relative flex h-[302px] shrink-0 flex-col border-b border-[#b9bbc0] bg-[#efefef]">
            <PanelStrip />
            <h2 className="flex h-[22px] shrink-0 items-center border-b border-[#c5c7cb] pl-[9px] text-[#7d7d7d]">编辑钢筋</h2>
            <div className="mb-[9px] ml-[10px] mr-[10px] mt-2 flex min-h-0 flex-1 flex-col border border-[#c0c2c6]">
                <div className="flex h-[28px] shrink-0 items-center border-b border-[#c5c7cb] pl-[3px] pt-px text-[#333]">
                    <button className="w-[18px] text-left">|&lt;</button>
                    <button className="w-[16px]">&lt;</button>
                    <button className="w-[18px]">&gt;</button>
                    <button className="w-[17px] text-right">&gt;|</button>
                    <button aria-label="上移" className="ml-[7px] w-6"><Svg size={15}><path d="M2 1h12v14H2z" stroke="#8a8f96" fill="#fff" /><path d="M2 1h12v3H2z" fill="#8a8f96" stroke="none" /><path d="M8 13V6M4.500 9L8 5.500 11.500 9" strokeWidth="2" /></Svg></button>
                    <button aria-label="下移" className="w-6"><Svg size={15}><path d="M2 1h12v14H2z" stroke="#8a8f96" fill="#fff" /><path d="M2 1h12v3H2z" fill="#8a8f96" stroke="none" /><path d="M8 5v8M4.500 9.500L8 13l3.500-3.500" strokeWidth="2" /></Svg></button>
                    <button className="flex w-[50px] items-center gap-[3px]"><Svg size={15}><path d="M3 2h5v3H3M3 15h5v-3H3" stroke="#8a8f96" /><path d="M9 7h6v3H9z" /><path d="M7 8.500H1M4 5.500l-3 3 3 3" stroke={ORANGE} strokeWidth="1.500" /></Svg>插入</button>
                    <button className="flex w-[53px] items-center gap-1"><DeleteIcon />删除</button>
                    <button className="flex w-[76px] items-center gap-1"><Svg size={15}><path d="M3 3h10M10 1l3 2-3 2" stroke={ORANGE} /><path d="M1 1v5M15 1v5" stroke="#8a8f96" /><path d="M2 8v7M5 9v6M8 11v4M11 12v3M14 14v1" /></Svg>缩尺配筋</button>
                    <button className="flex w-[75px] items-center gap-1"><Svg size={15}><path d="M2 1h8l4 4v10H2zM5 6h4M5 9h6M5 12h4" fill="#fff" strokeWidth="1.300" /></Svg>钢筋信息</button>
                    <button className="flex w-[77px] items-center gap-1"><Svg size={16}><path d="M1 2h14v12H1z" fill="#fff" strokeWidth="1.300" /><path d="M1 2h14v3H1z" fill={BLUE} /><path d="M3 8h2v3h4M11 8h2v3" stroke="#888" /></Svg>钢筋图库</button>
                    <button className="flex w-[61px] items-center gap-1"><Svg size={15}><path d="M2 1h7l4 4v10H2z" fill="#fff" strokeWidth="1.300" /><circle cx="11" cy="12" r="2.800" stroke={ORANGE} strokeWidth="2" /></Svg>其他<Caret className="ml-1 h-[3px] w-[5px] text-[#666]" /></button>
                    <span>单构件钢筋总重(kg)：516.722</span>
                </div>
                <div className="relative min-h-0 flex-1 overflow-hidden bg-white">
                    <div className="mr-[13px] bg-linear-to-b from-[#eee] from-[21px] to-white to-[21px]"><RebarTable /></div>
                    <span className="absolute right-[2px] top-[118px] h-[60px] w-2 rounded-full bg-[#c8c8c8]" />
                </div>
            </div>
            <div className="pointer-events-none absolute bottom-[12px] right-[11px] text-[21px] leading-[28px] text-[#c5c8cb] [-webkit-text-stroke:2px_#444a50] [paint-order:stroke_fill]">Body - Loud Luxury/Brando</div>
        </section>
    );
}

function Workspace() {
    return (
        <div className="flex min-w-0 flex-1 flex-col">
            <div className="relative min-h-0 flex-1 overflow-hidden bg-black">
                <ModelDrawing />
                <DisplayPanel />
                <ViewTools />
            </div>
            <div className="flex h-1 shrink-0 justify-center bg-white">
                <span className="flex w-[100px] justify-center bg-[#666d78]"><Caret className="h-[3px] w-[6px] text-[#c5c8cf]" /></span>
            </div>
            <EditPanel />
        </div>
    );
}

function StatusBar() {
    const tool = "flex h-[25px] items-center justify-center gap-1 border border-[#b0b2b6] bg-[#d0d1d4] text-[#333]";
    return (
        <footer className="flex h-[30px] shrink-0 items-center bg-[#dcdde0] pl-[2px] text-[#222]">
            <span className="w-[263px]">X = 196802 Y = 365330</span>
            <span className="w-[83px]">层高： 6.15</span>
            <span className="w-[133px]">标高： -6.15~0</span>
            <span className="w-[103px]">1(2)</span>
            <span className="w-[103px]">隐藏：0</span>
            <div className="flex gap-1">
                <button aria-label="正交" className={`${tool} w-[25px]`}><Svg size={14} box={14}><path d="M3 1v11h9M3 8h4v4" stroke="#333" strokeWidth="1.300" /></Svg></button>
                <button aria-label="对象捕捉" className="flex h-[25px] w-[37px] items-center justify-center gap-1 border border-[#3c96f5] bg-white"><Svg size={17}><path d="M4 3h9v11H4z" strokeWidth="1.300" /><path d="M1 1h4v4H1z" fill="#fcb27c" stroke={ORANGE} /></Svg><Caret className="h-[3px] w-[5px] text-[#555]" /></button>
                <button aria-label="交点" className={`${tool} w-[26px]`}><Svg size={16}><path d="M1 2l14 13M15 2L1 15" stroke="#888" /></Svg></button>
                <button aria-label="角度" className={`${tool} w-[35px]`}><Svg size={16}><path d="M13 2L3 13h12M5 10c2-1 4 0 5 3" stroke="#333" /></Svg><Caret className="h-[3px] w-[5px] text-[#555]" /></button>
                <button aria-label="偏移" className={`${tool} w-[35px]`}><Svg size={16}><path d="M4 1v7M1 4h6" stroke="#333" /><path d="M7 9h9v5H7z" fill="#444" stroke="none" /></Svg><Caret className="h-[3px] w-[5px] text-[#555]" /></button>
                <button className={`${tool} w-[73px]`}>跨图层选择</button>
                <button className={`${tool} w-[61px]`}>折线选择</button>
            </div>
            <span className="ml-auto pr-[36px]">250 FPS</span>
        </footer>
    );
}

function TaskIcon({ kind }) {
    const wrap = (c) => <svg width="30" height="32" viewBox="0 0 32 32" className="shrink-0" aria-hidden="true">{c}</svg>;
    switch (kind) {
        case "folder":
            return wrap(<><path d="M5 3l12-2v26l-4 4-8-3z" fill="#f2d877" /><path d="M11 5l12-2v21l-10 7z" fill="#f9e9a0" stroke="#d9b84c" strokeWidth=".6" /></>);
        case "drive":
            return wrap(<><path d="M2 14l14-7 14 7-14 8z" fill="#e8e8e8" /><path d="M2 14l14 8v6L2 19z" fill="#444" /><path d="M30 14l-14 8v6l14-9z" fill="#777" /></>);
        case "glodon":
            return <Logo size={31} />;
        case "page":
            return wrap(<><path d="M6 3h14l7 7v20H6z" fill="#fbfbfb" stroke="#999" strokeWidth=".6" /><path d="M20 3v7h7z" fill="#d0d0d0" /></>);
        case "wps":
            return wrap(<><rect width="32" height="32" rx="6" fill="#369cf8" /><path d="M8 10l3 12 5-8 5 8 3-12" fill="none" stroke="#fff" strokeWidth="2.500" /></>);
        case "group":
            return wrap(<><circle cx="16" cy="16" r="15" fill="#e4e0ee" /><path d="M16 1a15 15 0 0 1 15 15H16z" fill="#2a2226" /><path d="M1 16h15v15A15 15 0 0 1 1 16z" fill="#a39d98" /><path d="M16 16h15a15 15 0 0 1-15 15z" fill="#574a48" /><path d="M5 20c3-3 6 0 5 8M19 19l8 6M21 4l6 9" stroke="#d8cfc6" strokeWidth="2" fill="none" /><path d="M16 1v30M1 16h30" stroke="#fff" strokeWidth="1.500" /><path d="M8 5c4 2-3 5 3 9M12 4l-6 9" stroke="#7a80e0" strokeWidth="1.500" fill="none" /></>);
        case "qq":
            return wrap(<><path d="M16 1c6 0 8 5 8 10 3 4 4 8 3 11l-2-2c0 8-4 9-9 9s-9-1-9-9l-2 2c-1-3 0-7 3-11 0-5 2-10 8-10z" fill="#111" /><ellipse cx="16" cy="22" rx="6" ry="7" fill="#fff" /><path d="M8 15c5 3 11 3 16 0v3c-5 3-11 3-16 0z" fill="#e5262b" /><ellipse cx="13.500" cy="8" rx="2" ry="3" fill="#fff" /><ellipse cx="18.500" cy="8" rx="2" ry="3" fill="#fff" /><ellipse cx="16" cy="12.500" rx="4" ry="1.500" fill="#f6a623" /><path d="M7 29c3-2 6-1 8 1-3 2-7 2-8-1zM25 29c-3-2-6-1-8 1 3 2 7 2 8-1z" fill="#f6a623" /></>);
        case "cad":
            return wrap(<><rect x="1" y="1" width="30" height="30" rx="3" fill="#1667b5" stroke="#8db9de" strokeWidth="2" /><path d="M4 24h24M4 8h24" stroke="#4f93d3" /><text x="16" y="21" fontSize="13" fill="#fff" textAnchor="middle" fontFamily="'Liberation Sans', sans-serif">CAD</text></>);
        case "browser":
            return wrap(<><circle cx="16" cy="17" r="14" fill="#4cb848" stroke="#e9f7e2" strokeWidth="1.500" /><path d="M23 21a8 8 0 1 1 1-5H9M18 4c5-4 11-4 10 2" fill="none" stroke="#fff" strokeWidth="3" /></>);
        default:
            return wrap(<><rect width="32" height="32" rx="6" fill="#e94f43" /><path d="M11 8h7a5 5 0 0 1 0 11h-3v5M15 24h-4v-5" fill="none" stroke="#fff" strokeWidth="2.500" /></>);
    }
}

const tasks = [
    [["folder", "C:\\Users\\..."], ["drive", "Microsoft..."], ["folder", "C:\\Users\\..."], ["folder", "C:\\Users\\..."]],
    [["glodon", "广联达BI...", true]], [["page", "欢迎使用..."]], [["wps", "9.16广联..."]],
    [["group", "御泉山居..."], ["qq", "图片查看"]], [["cad", "CAD快速..."]], [["browser", "我来问 - ..."]], [["pdf", "49.pdf - ..."]],
];

const NetEase = ({ size }) => (
    <svg width={size} height={size} viewBox="0 0 32 32" aria-hidden="true">
        <rect width="32" height="32" rx="6" fill="#e10b1d" />
        <path d="M13 9a9 9 0 1 0 11 8c0-3-3-5-7-5-4 0-6 3-5 6s6 3 6-1L16 8c0-2 3-4 5-2" fill="none" stroke="#fff" strokeWidth="2.500" />
    </svg>
);

function Taskbar() {
    return (
        <div className="flex h-[40px] shrink-0 items-center border-t border-[#2e2823] bg-linear-to-r from-[#76665a] via-[#a28d7b] to-[#83705f] text-white">
            <button aria-label="开始" className="ml-2">
                <svg width="38" height="38" viewBox="0 0 38 38" aria-hidden="true">
                    <defs><radialGradient id="orb" cy=".85"><stop offset="0" stopColor="#7fd6f5" /><stop offset=".6" stopColor="#2a6ea5" /><stop offset="1" stopColor="#1c3f66" /></radialGradient></defs>
                    <circle cx="19" cy="19" r="17.500" fill="url(#orb)" stroke="#9db7c8" />
                    <path d="M11 10c3-1 5-1 7 1l-1 7c-2-2-5-2-8-1z" fill="#ee5a2a" /><path d="M20 12c3 1 5 1 8 0l-2 8c-3 1-5 0-7-1z" fill="#8dc63f" />
                    <path d="M8 19c3-1 6-1 8 1l-1 7c-2-2-5-2-8-1z" fill="#3fa0e8" /><path d="M18 21c3 1 5 2 8 1l-2 7c-3 1-5 0-7-1z" fill="#fbc52c" />
                </svg>
            </button>
            <button aria-label="网易云音乐" className="ml-[25px]"><NetEase size={32} /></button>
            <button aria-label="计算器" className="ml-[28px] mr-[19px]">
                <svg width="26" height="32" viewBox="0 0 26 32" aria-hidden="true"><rect x="1" y="1" width="24" height="30" rx="2" fill="#a9d2ef" stroke="#4f87b5" /><path d="M4 4h18v9H4z" fill="#f6e7c8" /><path d="M4 17h18M4 21h18M4 25h18M4 28h18" stroke="#3c78ad" strokeWidth="2.500" strokeDasharray="3 1.500" /></svg>
            </button>
            <div className="flex gap-[2px]">
                {tasks.map((group, i) => (
                    <div key={i} className="flex overflow-hidden rounded-[3px] shadow-[0_0_0_1px_#4d4239]">
                        {group.map(([kind, t, on], j) => (
                            <button key={j} className={`flex h-[37px] w-[117px] items-center gap-[6px] whitespace-nowrap border-l border-t border-[#d5c8bb]/60 bg-linear-to-br pl-[6px] text-left ${on ? "from-[#e3dcd5] to-[#a99c90]" : "from-white/35 to-white/5"}`}>
                                <TaskIcon kind={kind} />
                                <span className="[text-shadow:0_0_3px_#0006]">{t}</span>
                            </button>
                        ))}
                    </div>
                ))}
            </div>
            <div className="ml-auto flex items-center gap-[8px]">
                <Svg size={18} className="mr-[8px]"><rect x="1" y="1" width="14" height="14" rx="2" fill="#ee5a28" stroke="none" /><path d="M12 5c-3-3-8-1-6 1 1 2 6 1 6 4s-6 3-8 0" stroke="#fff" strokeWidth="2" /></Svg>
                <Svg><rect width="16" height="16" rx="2" fill="#fff" stroke="none" /><circle cx="8" cy="5" r="2.500" stroke="#e0344c" strokeWidth="1.500" /><circle cx="5" cy="10" r="2.500" stroke="#2f8ff0" strokeWidth="1.500" /><circle cx="11" cy="10" r="2.500" stroke="#2f8ff0" strokeWidth="1.500" /></Svg>
                <NetEase size={16} />
                <FaWeixin className="text-[16px] text-[#4fd35c]" />
                <Svg><path d="M4 1h5v6H4zM3 6h7v7H3z" fill="#aaa" stroke="#555" /><circle cx="11" cy="11" r="4.500" fill="#2fae3a" stroke="#fff" /><path d="M9 11l2 2 3-4" stroke="#fff" strokeWidth="1.300" /></Svg>
                <div className="w-4 [&>svg]:h-[17px] [&>svg]:w-4"><TaskIcon kind="qq" /></div>
                <Svg><path d="M5 4h10v8H5zM8 14h5M2 1v4h2M2 5v9h4" stroke="#fff" strokeWidth="1.400" /></Svg>
                <Svg><path d="M1 6h3l4-4v12l-4-4H1z" fill="#fff" stroke="none" /><path d="M10 5c1 2 1 4 0 6M12 3c2 3 2 7 0 10" stroke="#fff" strokeWidth="1.200" /></Svg>
                <Svg><rect width="16" height="16" rx="2" fill="#fff" stroke="none" /><path d="M5 12a3 3 0 0 1 0-5 3.500 3.500 0 0 1 6 0 3 3 0 0 1 0 5zM6 10l2-2 3 4" stroke="#2f7ff0" strokeWidth="1.500" /></Svg>
            </div>
            <div className="ml-[12px] mr-[7px] w-[66px] text-center leading-[18px]"><div>9:55</div><div>2020/11/9</div></div>
            <span className="h-full w-[14px] border-l border-[#4d4239] bg-linear-to-b from-white/40 to-black/30" />
        </div>
    );
}

export default function App() {
    return (
        <div className="flex h-screen flex-col overflow-hidden bg-white font-['Open_Sans','Noto_Sans_CJK_SC',sans-serif] text-[12px] leading-4">
            <Header />
            <Ribbon />
            <FilterBar />
            <main className="flex min-h-0 flex-1">
                <NavPanel />
                <div className="ml-1 flex w-[280px] shrink-0 flex-col">
                    <MemberPanel />
                    <PropertyPanel />
                </div>
                <div className="flex w-1 shrink-0 flex-col">
                    <span className="mt-[220px] flex h-[100px] items-center bg-[#666d78]"><Svg size={4} box={4}><path d="M4 0v4L0 2z" fill="#c5c8cf" stroke="none" /></Svg></span>
                </div>
                <Workspace />
            </main>
            <StatusBar />
            <Taskbar />
        </div>
    );
}
